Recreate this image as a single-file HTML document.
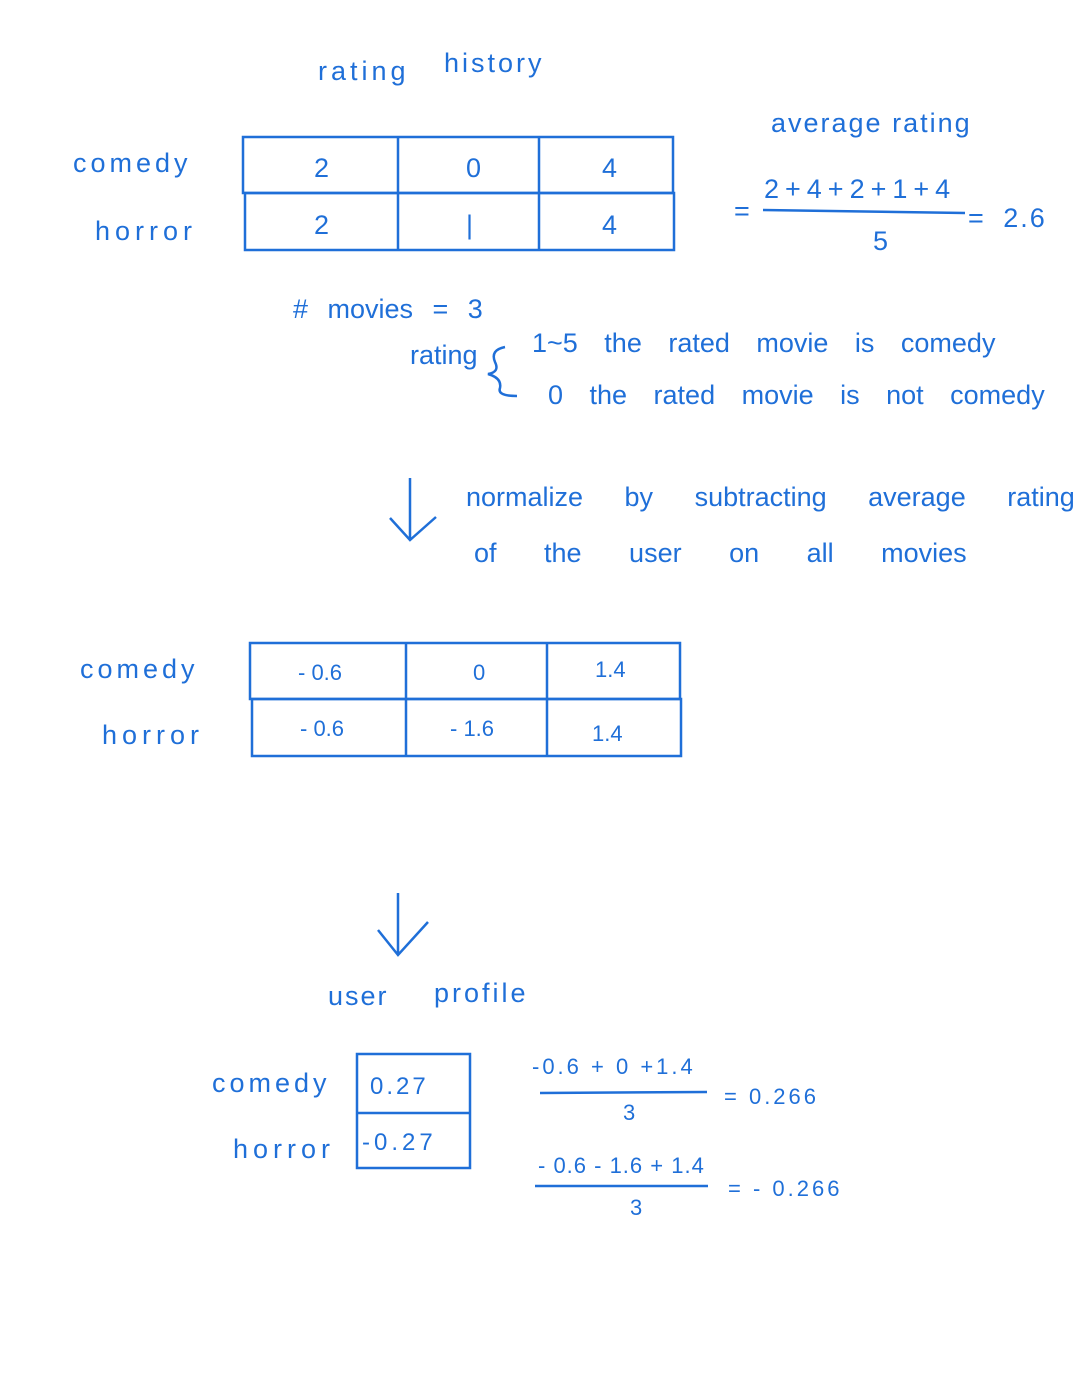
<!DOCTYPE html>
<html><head><meta charset="utf-8"><style>
body{margin:0;width:1079px;height:1394px;background:#fff;position:relative;overflow:hidden;font-family:"Liberation Sans",sans-serif;color:#1f6fd8}
.t{position:absolute;white-space:nowrap;font-size:27px;line-height:1}
.s{font-size:22px}
.w{letter-spacing:4px}
</style></head><body>
<svg width="1079" height="1394" style="position:absolute;left:0;top:0" fill="none" stroke="#1f6fd8" stroke-width="2.5">
<rect x="243" y="137" width="430" height="56"/><rect x="245" y="193" width="429" height="57"/>
<line x1="398" y1="137" x2="398" y2="250"/><line x1="539" y1="137" x2="539" y2="250"/>
<line x1="763" y1="210" x2="965" y2="213"/>
<rect x="250" y="643" width="430" height="56"/><rect x="252" y="699" width="429" height="57"/>
<line x1="406" y1="643" x2="406" y2="756"/><line x1="547" y1="643" x2="547" y2="756"/>
<rect x="357" y="1054" width="113" height="114"/><line x1="357" y1="1113" x2="470" y2="1113"/>
<line x1="540" y1="1093" x2="707" y2="1092"/><line x1="535" y1="1186" x2="708" y2="1186"/>
<path d="M410 478 L410 540 M390 518 L410 540 L436 517"/>
<path d="M398 893 L398 955 M378 930 L398 955 L428 922"/>
<path d="M505 347 Q490 350 495 362 Q500 372 488 374 Q502 378 500 388 Q497 396 517 396"/>
</svg>
<div class="t w" style="left:318px;top:58px">rating</div>
<div class="t" style="left:444px;top:50px;letter-spacing:3px">history</div>
<div class="t" style="left:771px;top:110px;letter-spacing:2px">average rating</div>
<div class="t w" style="left:73px;top:150px">comedy</div>
<div class="t" style="left:95px;top:218px;letter-spacing:5px">horror</div>
<div class="t" style="left:314px;top:155px">2</div><div class="t" style="left:466px;top:155px">0</div><div class="t" style="left:602px;top:155px">4</div>
<div class="t" style="left:314px;top:212px">2</div><div class="t" style="left:466px;top:212px">|</div><div class="t" style="left:602px;top:212px">4</div>
<div class="t" style="left:734px;top:198px">=</div>
<div class="t" style="left:764px;top:176px;letter-spacing:6px">2+4+2+1+4</div>
<div class="t" style="left:873px;top:228px">5</div>
<div class="t" style="left:968px;top:205px;letter-spacing:2px;word-spacing:8px">= 2.6</div>
<div class="t" style="left:293px;top:296px;word-spacing:12px">#  movies = 3</div>
<div class="t" style="left:410px;top:342px">rating</div>
<div class="t" style="left:532px;top:330px;word-spacing:19px">1~5 the rated movie is comedy</div>
<div class="t" style="left:548px;top:382px;word-spacing:19px">0 the rated movie is not comedy</div>
<div class="t" style="left:466px;top:484px;word-spacing:34px">normalize by subtracting average rating</div>
<div class="t" style="left:474px;top:540px;word-spacing:40px">of the user on all movies</div>
<div class="t w" style="left:80px;top:656px">comedy</div>
<div class="t" style="left:102px;top:722px;letter-spacing:5px">horror</div>
<div class="t s" style="left:298px;top:662px">- 0.6</div><div class="t s" style="left:473px;top:662px">0</div><div class="t s" style="left:595px;top:659px">1.4</div>
<div class="t s" style="left:300px;top:718px">- 0.6</div><div class="t s" style="left:450px;top:718px">- 1.6</div><div class="t s" style="left:592px;top:723px">1.4</div>
<div class="t" style="left:328px;top:983px;letter-spacing:2px">user</div>
<div class="t" style="left:434px;top:980px;letter-spacing:3px">profile</div>
<div class="t w" style="left:212px;top:1070px">comedy</div>
<div class="t" style="left:233px;top:1136px;letter-spacing:5px">horror</div>
<div class="t" style="left:370px;top:1075px;font-size:24px;letter-spacing:3px">0.27</div>
<div class="t" style="left:362px;top:1131px;font-size:24px;letter-spacing:4px">-0.27</div>
<div class="t s" style="left:532px;top:1056px;letter-spacing:3px">-0.6 + 0 +1.4</div>
<div class="t s" style="left:623px;top:1102px">3</div>
<div class="t s" style="left:724px;top:1086px;letter-spacing:3px">= 0.266</div>
<div class="t s" style="left:538px;top:1155px;letter-spacing:1px">- 0.6 - 1.6 + 1.4</div>
<div class="t s" style="left:630px;top:1197px">3</div>
<div class="t s" style="left:728px;top:1178px;letter-spacing:3px">= - 0.266</div>
</body></html>
